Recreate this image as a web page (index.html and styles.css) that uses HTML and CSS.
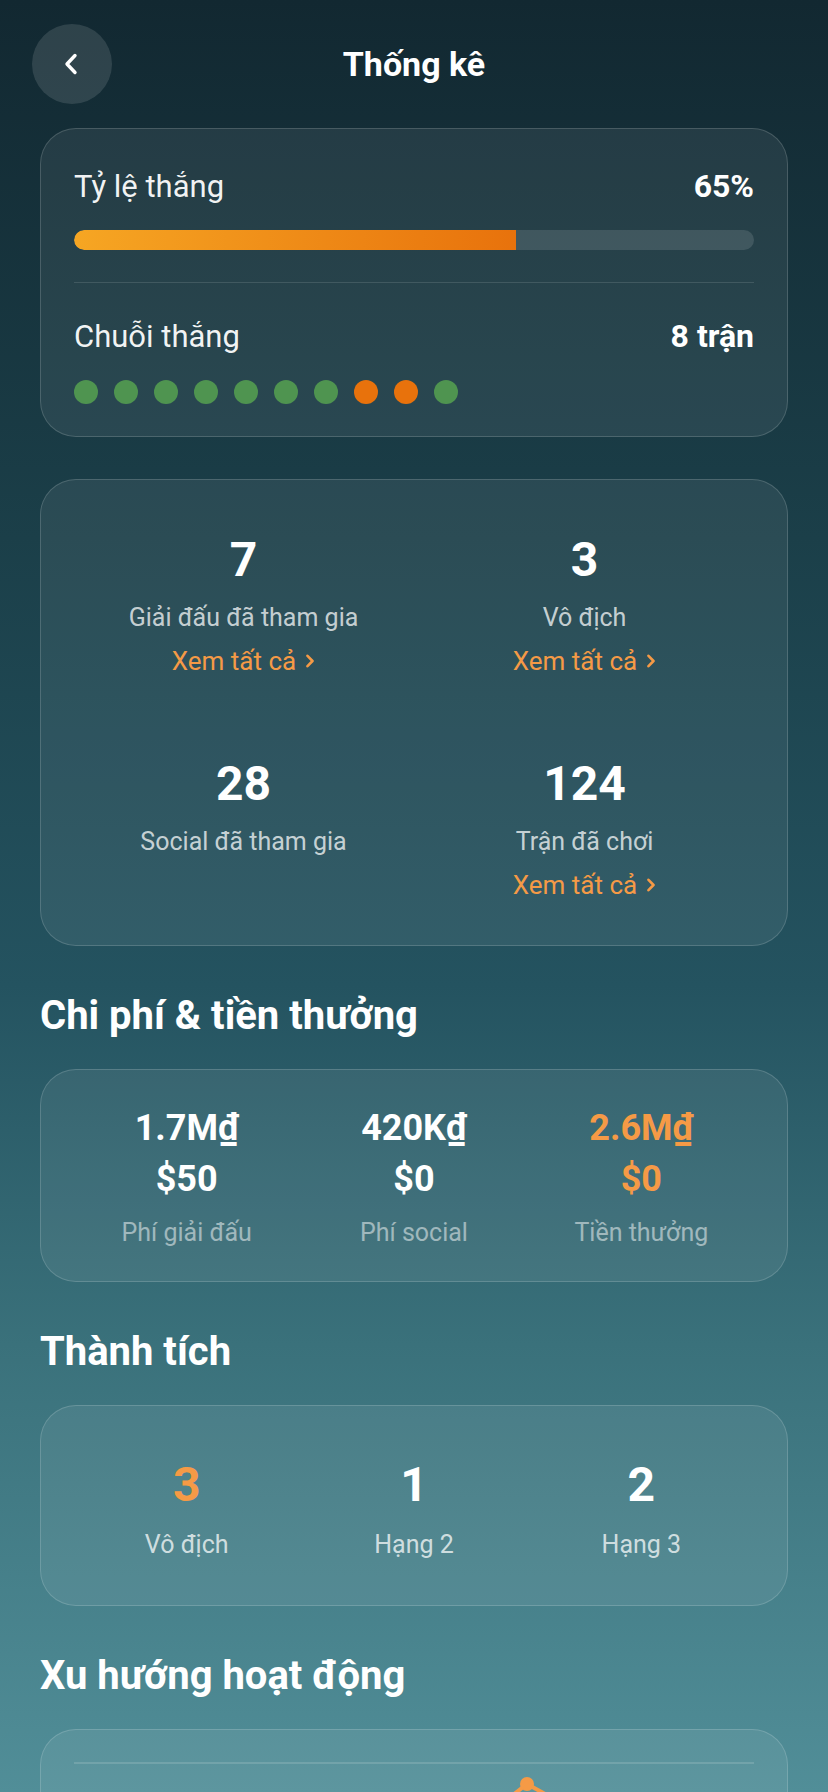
FILE: index.html
```html
<!DOCTYPE html>
<html lang="vi">
<head>
<meta charset="utf-8">
<title>Thống kê</title>
<link rel="stylesheet" href="styles.css">
</head>
<body>
<div class="screen">
  <header class="topbar">
    <button class="back" aria-label="Quay lại">
      <svg width="20" height="24" viewBox="0 0 20 24"><polyline points="13,3.5 5,12 13,20.5" fill="none" stroke="#fff" stroke-width="3.4" stroke-linecap="round" stroke-linejoin="round"/></svg>
    </button>
    <h1 class="title">Thống kê</h1>
    <span class="spacer"></span>
  </header>

  <main class="content">
    <section class="card winrate">
      <div class="row">
        <span class="row-label">Tỷ lệ thắng</span>
        <span class="row-value">65%</span>
      </div>
      <div class="bar"><div class="bar-fill" style="width:65%"></div></div>
      <div class="divider"></div>
      <div class="row">
        <span class="row-label">Chuỗi thắng</span>
        <span class="row-value">8 trận</span>
      </div>
      <div class="streak">
        <span class="dot win"></span><span class="dot win"></span><span class="dot win"></span><span class="dot win"></span><span class="dot win"></span><span class="dot win"></span><span class="dot win"></span><span class="dot loss"></span><span class="dot loss"></span><span class="dot win"></span>
      </div>
    </section>

    <section class="card grid2">
      <div class="cell">
        <div class="num">7</div>
        <div class="lbl">Giải đấu đã tham gia</div>
        <a class="more">Xem tất cả<svg width="10" height="14" viewBox="0 0 10 14"><polyline points="2.5,1.8 7.5,7 2.5,12.2" fill="none" stroke="currentColor" stroke-width="2.6" stroke-linecap="round" stroke-linejoin="round"/></svg></a>
      </div>
      <div class="cell">
        <div class="num">3</div>
        <div class="lbl">Vô địch</div>
        <a class="more">Xem tất cả<svg width="10" height="14" viewBox="0 0 10 14"><polyline points="2.5,1.8 7.5,7 2.5,12.2" fill="none" stroke="currentColor" stroke-width="2.6" stroke-linecap="round" stroke-linejoin="round"/></svg></a>
      </div>
      <div class="cell">
        <div class="num">28</div>
        <div class="lbl">Social đã tham gia</div>
      </div>
      <div class="cell">
        <div class="num">124</div>
        <div class="lbl">Trận đã chơi</div>
        <a class="more">Xem tất cả<svg width="10" height="14" viewBox="0 0 10 14"><polyline points="2.5,1.8 7.5,7 2.5,12.2" fill="none" stroke="currentColor" stroke-width="2.6" stroke-linecap="round" stroke-linejoin="round"/></svg></a>
      </div>
    </section>

    <h2 class="section-title">Chi phí &amp; tiền thưởng</h2>
    <section class="card grid3 money">
      <div class="cell">
        <div class="amt">1.7M₫</div>
        <div class="amt">$50</div>
        <div class="lbl muted">Phí giải đấu</div>
      </div>
      <div class="cell">
        <div class="amt">420K₫</div>
        <div class="amt">$0</div>
        <div class="lbl muted">Phí social</div>
      </div>
      <div class="cell accent">
        <div class="amt">2.6M₫</div>
        <div class="amt">$0</div>
        <div class="lbl muted">Tiền thưởng</div>
      </div>
    </section>

    <h2 class="section-title">Thành tích</h2>
    <section class="card grid3 awards">
      <div class="cell">
        <div class="num accent">3</div>
        <div class="lbl">Vô địch</div>
      </div>
      <div class="cell">
        <div class="num">1</div>
        <div class="lbl">Hạng 2</div>
      </div>
      <div class="cell">
        <div class="num">2</div>
        <div class="lbl">Hạng 3</div>
      </div>
    </section>

    <h2 class="section-title">Xu hướng hoạt động</h2>
    <section class="card trend">
      <svg class="chart" width="680" height="300" viewBox="0 0 680 300">
        <g stroke="rgba(255,255,255,0.14)" stroke-width="2">
          <line x1="0" y1="1" x2="680" y2="1"/>
          <line x1="0" y1="75" x2="680" y2="75"/>
          <line x1="0" y1="150" x2="680" y2="150"/>
          <line x1="0" y1="225" x2="680" y2="225"/>
        </g>
        <polyline points="20,200 106,160 192,180 280,120 366,90 453,22 540,70 626,110" fill="none" stroke="#f59a46" stroke-width="4" stroke-linejoin="round" stroke-linecap="round"/>
        <g fill="#f59a46">
          <circle cx="20" cy="200" r="7"/>
          <circle cx="106" cy="160" r="7"/>
          <circle cx="192" cy="180" r="7"/>
          <circle cx="280" cy="120" r="7"/>
          <circle cx="366" cy="90" r="7"/>
          <circle cx="453" cy="22" r="7"/>
          <circle cx="540" cy="70" r="7"/>
          <circle cx="626" cy="110" r="7"/>
        </g>
      </svg>
    </section>
  </main>
</div>
</body>
</html>
```

FILE: styles.css
```css
* { box-sizing: border-box; }

html, body {
  margin: 0;
  padding: 0;
}

body {
  font-family: Roboto, "Noto Sans", "Liberation Sans", sans-serif;
  color: #fff;
}

.screen {
  width: 828px;
  height: 1792px;
  overflow: hidden;
  background: linear-gradient(180deg, #122831 0%, #1b3f49 30%, #245360 55%, #3a717b 75%, #518e98 100%);
}

.topbar {
  display: grid;
  grid-template-columns: 80px 1fr 80px;
  align-items: center;
  padding: 24px 32px 0;
}

.back {
  width: 80px;
  height: 80px;
  border: 0;
  border-radius: 50%;
  background: rgba(255, 255, 255, 0.12);
  display: flex;
  align-items: center;
  justify-content: center;
  padding: 0;
}

.title {
  margin: 0;
  text-align: center;
  font-size: 34px;
  font-weight: 700;
  line-height: 40px;
}

.content {
  padding: 24px 40px 0;
}

.card {
  border: 1px solid rgba(255, 255, 255, 0.16);
  background: rgba(255, 255, 255, 0.07);
  border-radius: 36px;
}

/* win rate card */
.winrate {
  padding: 39px 33px 32px;
}

.row {
  display: flex;
  justify-content: space-between;
  align-items: baseline;
  line-height: 36px;
}

.row-label {
  font-size: 31px;
  color: rgba(255, 255, 255, 0.94);
}

.row-value {
  font-size: 32px;
  font-weight: 700;
}

.bar {
  margin-top: 25px;
  height: 20px;
  border-radius: 10px;
  background: rgba(255, 255, 255, 0.12);
  overflow: hidden;
}

.bar-fill {
  height: 100%;
  border-radius: 10px 0 0 10px;
  background: linear-gradient(90deg, #f6a623, #e8720c);
}

.divider {
  height: 1px;
  background: rgba(255, 255, 255, 0.12);
  margin: 32px 0 35px;
}

.streak {
  display: flex;
  gap: 16px;
  margin-top: 25px;
}

.dot {
  width: 24px;
  height: 24px;
  border-radius: 50%;
}

.dot.win { background: #4f9450; }
.dot.loss { background: #e8720c; }

/* grids */
.grid2 {
  margin-top: 42px;
  display: grid;
  grid-template-columns: 1fr 1fr;
  row-gap: 79px;
  padding: 52px 32px 44px;
}

.grid3 {
  display: grid;
  grid-template-columns: 1fr 1fr 1fr;
  padding: 33px 32px 32px;
}

.cell {
  display: flex;
  flex-direction: column;
  align-items: center;
}

.num {
  font-size: 48px;
  font-weight: 700;
  line-height: 56px;
}

.num.accent { color: #f59a46; }

.lbl {
  margin-top: 14px;
  font-size: 25px;
  line-height: 32px;
  color: rgba(255, 255, 255, 0.74);
}

.lbl.muted {
  margin-top: 12px;
  color: rgba(255, 255, 255, 0.5);
}

.more {
  margin-top: 11px;
  font-size: 26px;
  line-height: 32px;
  color: #f59a46;
  display: flex;
  align-items: center;
}

.more svg {
  margin-left: 9px;
}

.section-title {
  margin: 46px 0 29px;
  font-size: 40px;
  line-height: 48px;
  font-weight: 700;
}

.amt {
  font-size: 36px;
  font-weight: 700;
  line-height: 51px;
}

.accent .amt { color: #f59a46; }

.awards {
  padding: 51px 32px 44px;
}

.awards .lbl {
  margin-top: 16px;
}

.trend {
  padding: 32px 33px 40px;
}

.chart {
  display: block;
}
```
